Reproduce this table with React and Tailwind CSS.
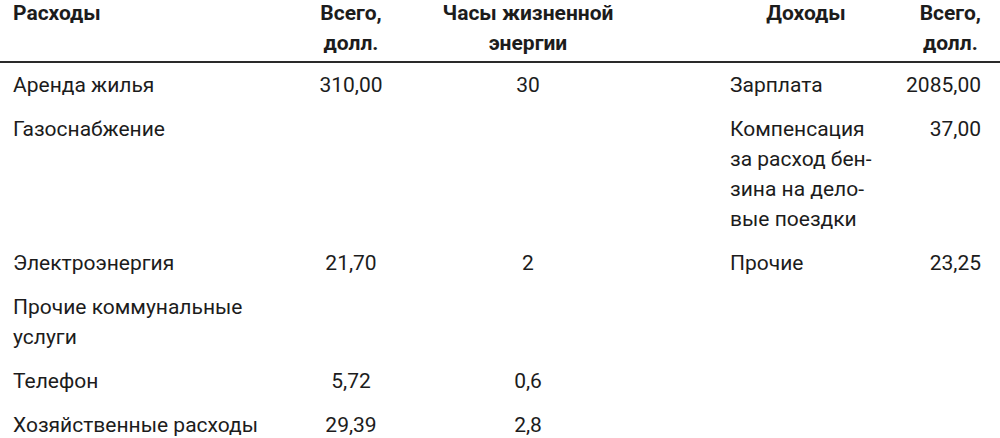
import React from 'react';

const rows = [
  { name: ['Аренда жилья'], total: '310,00', hours: '30', income: ['Зарплата'], sum: '2085,00' },
  { name: ['Газоснабжение'], total: '', hours: '', income: ['Компенсация', 'за расход бен-', 'зина на дело-', 'вые поездки'], sum: '37,00' },
  { name: ['Электроэнергия'], total: '21,70', hours: '2', income: ['Прочие'], sum: '23,25' },
  { name: ['Прочие коммунальные', 'услуги'], total: '', hours: '', income: [], sum: '' },
  { name: ['Телефон'], total: '5,72', hours: '0,6', income: [], sum: '' },
  { name: ['Хозяйственные расходы'], total: '29,39', hours: '2,8', income: [], sum: '' },
];

function Lines({ lines }) {
  return lines.map((l, i) => <div key={i}>{l}</div>);
}

export default function App() {
  return (
    <div className="w-[1000px] h-[438px] overflow-hidden bg-white text-[#1c1c1c] text-[21px] leading-[30px]" style={{ fontFamily: 'Roboto, "Liberation Sans", sans-serif' }}>
      <div className="grid grid-cols-[290px_122px_232px_238px_118px] font-bold -mt-[2px] pb-[3px] border-b-2 border-[#2a2a2a]">
        <div className="pl-[13px]">Расходы</div>
        <div className="text-center"><Lines lines={['Всего,', 'долл.']} /></div>
        <div className="text-center"><Lines lines={['Часы жизненной', 'энергии']} /></div>
        <div className="pl-[86px] text-center">Доходы</div>
        <div className="pr-[19px] text-right">
          <div className="inline-block text-center"><Lines lines={['Всего,', 'долл.']} /></div>
        </div>
      </div>
      {rows.map((r, i) => (
        <div key={i} className="grid grid-cols-[290px_122px_232px_238px_118px] py-[7px]">
          <div className="pl-[13px]"><Lines lines={r.name} /></div>
          <div className="text-center">{r.total}</div>
          <div className="text-center">{r.hours}</div>
          <div className="pl-[86px]"><Lines lines={r.income} /></div>
          <div className="pr-[19px] text-right">{r.sum}</div>
        </div>
      ))}
    </div>
  );
}
